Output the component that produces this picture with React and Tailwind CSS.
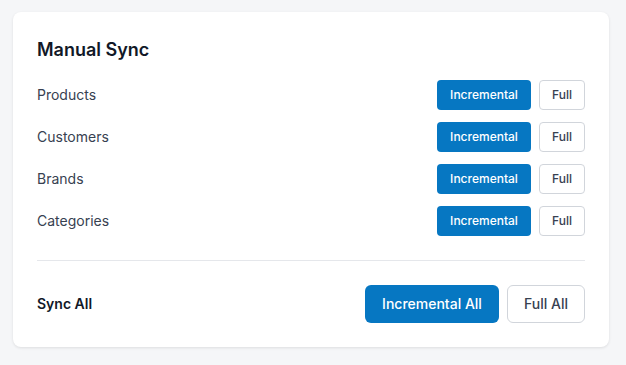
import React from 'react';

const entities = ['Products', 'Customers', 'Brands', 'Categories'];

const SyncRow = ({ label }) => (
  <div className="flex items-center justify-between h-[30px]">
    <span className="text-sm text-[#374151]">{label}</span>
    <div className="flex items-center gap-2">
      <button className="h-[30px] w-[94px] rounded bg-[#0677c2] text-xs font-medium text-white">
        Incremental
      </button>
      <button className="h-[30px] w-[46px] rounded border border-[#d1d5db] bg-white text-xs font-medium text-[#374151]">
        Full
      </button>
    </div>
  </div>
);

const App = () => {
  return (
    <div
      className="min-h-screen bg-[#f5f6f8] pt-3 pl-[13px]"
      style={{ fontFamily: 'Inter, "Noto Sans", sans-serif' }}
    >
      <div className="w-[596px] rounded-lg bg-white p-6 shadow-[0_1px_3px_rgba(0,0,0,0.1)]">
        <h2 className="mb-4 text-lg font-semibold leading-7 text-[#111827]">Manual Sync</h2>

        <div className="flex flex-col gap-3">
          {entities.map((name) => (
            <SyncRow key={name} label={name} />
          ))}
        </div>

        <div className="mt-6 border-t border-[#e5e7eb] pt-6 flex items-center justify-between">
          <span className="text-sm font-semibold text-[#111827]">Sync All</span>
          <div className="flex items-center gap-2">
            <button className="h-[38px] w-[134px] rounded-md bg-[#0677c2] text-sm font-medium text-white">
              Incremental All
            </button>
            <button className="h-[38px] w-[78px] rounded-md border border-[#d1d5db] bg-white text-sm font-medium text-[#374151]">
              Full All
            </button>
          </div>
        </div>
      </div>
    </div>
  );
};

export default App;
